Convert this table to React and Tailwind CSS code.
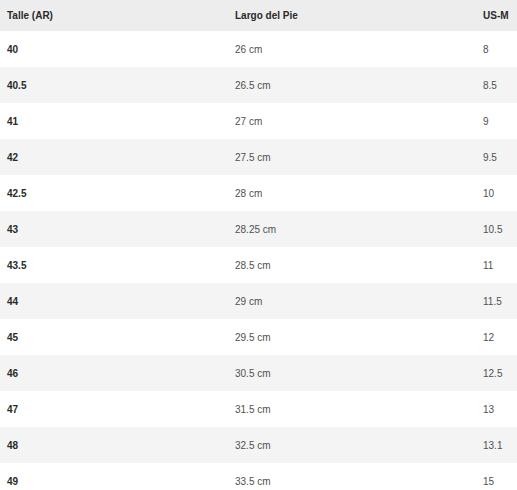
export default function App() {
  const rows = [
    ["40", "26 cm", "8"],
    ["40.5", "26.5 cm", "8.5"],
    ["41", "27 cm", "9"],
    ["42", "27.5 cm", "9.5"],
    ["42.5", "28 cm", "10"],
    ["43", "28.25 cm", "10.5"],
    ["43.5", "28.5 cm", "11"],
    ["44", "29 cm", "11.5"],
    ["45", "29.5 cm", "12"],
    ["46", "30.5 cm", "12.5"],
    ["47", "31.5 cm", "13"],
    ["48", "32.5 cm", "13.1"],
    ["49", "33.5 cm", "15"],
  ];
  return (
    <div className="w-[517px] h-[490px] overflow-hidden bg-white" style={{ fontFamily: '"Liberation Sans", Arial, sans-serif' }}>
      <div className="flex h-[31px] items-center bg-[#ededed] text-[10px] font-semibold text-[#2a2a2a]">
        <div className="w-[228px] pl-[7px]">Talle (AR)</div>
        <div className="w-[248px] pl-[7px]">Largo del Pie</div>
        <div className="flex-1 pl-[7px]">US-M</div>
      </div>
      {rows.map((r, i) => (
        <div key={i} className={`flex h-[36px] items-center text-[10px] ${i % 2 === 1 ? "bg-[#f4f4f4]" : "bg-white"}`}>
          <div className="w-[228px] pl-[7px] font-semibold text-[#2a2a2a]">{r[0]}</div>
          <div className="w-[248px] pl-[7px] text-[#505050]">{r[1]}</div>
          <div className="flex-1 pl-[7px] text-[#505050]">{r[2]}</div>
        </div>
      ))}
    </div>
  );
}
